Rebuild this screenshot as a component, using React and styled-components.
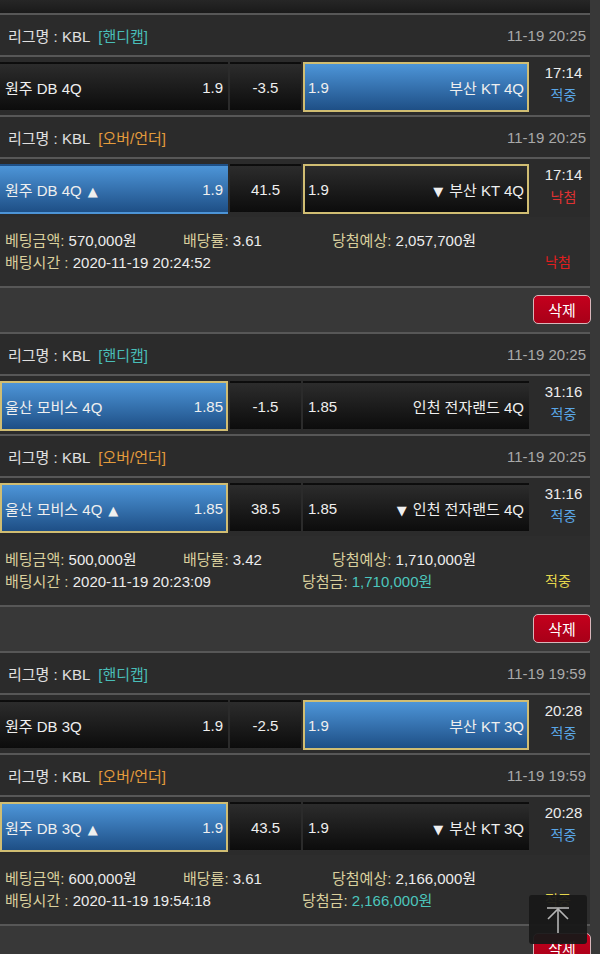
import React from "react";
import styled, { createGlobalStyle } from "styled-components";

const Global = createGlobalStyle`
  html, body { margin: 0; padding: 0; background: #383838; }
  body { font-family: "Liberation Sans", "Noto Sans CJK KR", sans-serif; font-size: 15px; color: #e6e6e6; }
  * { box-sizing: border-box; }
`;

const Page = styled.div`
  width: 590px;
  display: flex;
  flex-direction: column;
`;

const TopStrip = styled.div`
  height: 13px;
  background: linear-gradient(#262626, #1a1a1a);
`;

const Line = styled.div`
  height: 2px;
  background: #575757;
`;

const Header = styled.div`
  height: 40px;
  background: #2b2b2b;
  display: flex;
  align-items: center;
  justify-content: space-between;
  padding: 0 4px 0 8px;
`;

const League = styled.span`
  color: #e0e0e0;
`;

const Tag = styled.span`
  margin-left: 8px;
  color: ${(p) => (p.$kind === "ou" ? "#e39b3c" : "#49bdb8")};
`;

const DateText = styled.span`
  color: #a9a9a9;
`;

const MatchRow = styled.div`
  height: 58px;
  background: #2b2b2b;
  display: grid;
  grid-template-columns: 228px 71px 226px 1fr;
  column-gap: 2px;
  padding: 5px 0 3px;
`;

const Cell = styled.div`
  height: 50px;
  display: flex;
  align-items: center;
  justify-content: ${(p) => (p.$center ? "center" : "space-between")};
  padding: 0 3px;
  color: #efefef;
  border: 2px solid ${(p) => (p.$picked ? "#d0bd72" : "transparent")};
  background: ${(p) =>
    p.$blue
      ? "linear-gradient(#4d95d8, #1e4f86)"
      : "linear-gradient(#2c2c2c, #0c0c0c)"};
  white-space: nowrap;
`;

const Tri = styled.span`
  font-family: "DejaVu Sans", sans-serif;
  font-size: 13px;
  margin: ${(p) => (p.$down ? "0 6px 0 0" : "0 0 0 6px")};
`;

const TimeCol = styled.div`
  display: flex;
  flex-direction: column;
  align-items: center;
  justify-content: center;
  padding: 0 0 6px 6px;
  line-height: 22px;
`;

const Clock = styled.span`
  color: #ececec;
`;

const Status = styled.span`
  font-size: 14px;
  color: ${(p) => p.$color};
`;

const Info = styled.div`
  background: #2d2d2d;
  padding: 11px 0 14px 5px;
  display: flex;
  flex-direction: column;
`;

const InfoLine = styled.div`
  display: flex;
  height: 22px;
  align-items: center;
  white-space: nowrap;
`;

const InfoItem = styled.span`
  width: ${(p) => (p.$w ? `${p.$w}px` : "auto")};
  flex: ${(p) => (p.$w ? "none" : "1")};
  color: #ececec;
`;

const Label = styled.span`
  color: #d9cf9c;
`;

const WinValue = styled.span`
  color: #4cc6bd;
`;

const Result = styled.span`
  width: 60px;
  text-align: center;
  margin-right: 2px;
  font-size: 14px;
  color: ${(p) => p.$color};
`;

const DeleteRow = styled.div`
  height: 44px;
  background: #383838;
  display: flex;
  justify-content: flex-end;
  align-items: flex-start;
  padding: 7px 0 0;
  margin-right: -1px;
`;

const DeleteButton = styled.button`
  width: 58px;
  height: 29px;
  border: 1.5px solid #d8b6ba;
  border-radius: 5px;
  background: linear-gradient(#c4001d, #a80018);
  color: #fff;
  font-family: inherit;
  font-size: 15px;
  padding: 0;
`;

const TopButton = styled.div`
  position: fixed;
  right: 13px;
  bottom: 10px;
  width: 58px;
  height: 49px;
  background: rgba(24, 24, 24, 0.95);
  border-radius: 3px;
  display: flex;
  align-items: center;
  justify-content: center;
`;

const BLUE = "#5aa6e6";
const RED = "#e03232";
const YELLOW = "#e4d64c";

const groups = [
  {
    matches: [
      {
        kind: "hc",
        date: "11-19 20:25",
        left: { name: "원주 DB 4Q", odds: "1.9" },
        mid: "-3.5",
        right: { odds: "1.9", name: "부산 KT 4Q", blue: true, picked: true },
        time: "17:14",
        status: "적중",
        statusColor: BLUE,
      },
      {
        kind: "ou",
        date: "11-19 20:25",
        left: { name: "원주 DB 4Q", odds: "1.9", blue: true, up: true },
        mid: "41.5",
        right: { odds: "1.9", name: "부산 KT 4Q", picked: true, down: true },
        time: "17:14",
        status: "낙첨",
        statusColor: RED,
      },
    ],
    info: {
      amount: "570,000원",
      rate: "3.61",
      expect: "2,057,700원",
      at: "2020-11-19 20:24:52",
      win: null,
      result: "낙첨",
      resultColor: "#e01e1e",
    },
  },
  {
    matches: [
      {
        kind: "hc",
        date: "11-19 20:25",
        left: { name: "울산 모비스 4Q", odds: "1.85", blue: true, picked: true },
        mid: "-1.5",
        right: { odds: "1.85", name: "인천 전자랜드 4Q" },
        time: "31:16",
        status: "적중",
        statusColor: BLUE,
      },
      {
        kind: "ou",
        date: "11-19 20:25",
        left: { name: "울산 모비스 4Q", odds: "1.85", blue: true, picked: true, up: true },
        mid: "38.5",
        right: { odds: "1.85", name: "인천 전자랜드 4Q", down: true },
        time: "31:16",
        status: "적중",
        statusColor: BLUE,
      },
    ],
    info: {
      amount: "500,000원",
      rate: "3.42",
      expect: "1,710,000원",
      at: "2020-11-19 20:23:09",
      win: "1,710,000원",
      result: "적중",
      resultColor: YELLOW,
    },
  },
  {
    matches: [
      {
        kind: "hc",
        date: "11-19 19:59",
        left: { name: "원주 DB 3Q", odds: "1.9" },
        mid: "-2.5",
        right: { odds: "1.9", name: "부산 KT 3Q", blue: true, picked: true },
        time: "20:28",
        status: "적중",
        statusColor: BLUE,
      },
      {
        kind: "ou",
        date: "11-19 19:59",
        left: { name: "원주 DB 3Q", odds: "1.9", blue: true, picked: true, up: true },
        mid: "43.5",
        right: { odds: "1.9", name: "부산 KT 3Q", down: true },
        time: "20:28",
        status: "적중",
        statusColor: BLUE,
      },
    ],
    info: {
      amount: "600,000원",
      rate: "3.61",
      expect: "2,166,000원",
      at: "2020-11-19 19:54:18",
      win: "2,166,000원",
      result: "적중",
      resultColor: YELLOW,
    },
  },
];

function Match({ m }) {
  return (
    <>
      <Line />
      <Header>
        <span>
          <League>리그명 : KBL</League>
          <Tag $kind={m.kind}>{m.kind === "ou" ? "[오버/언더]" : "[핸디캡]"}</Tag>
        </span>
        <DateText>{m.date}</DateText>
      </Header>
      <Line />
      <MatchRow>
        <Cell $blue={m.left.blue} $picked={m.left.picked}>
          <span>
            {m.left.name}
            {m.left.up && <Tri>▲</Tri>}
          </span>
          <span>{m.left.odds}</span>
        </Cell>
        <Cell $center>{m.mid}</Cell>
        <Cell $blue={m.right.blue} $picked={m.right.picked}>
          <span>{m.right.odds}</span>
          <span>
            {m.right.down && <Tri $down>▼</Tri>}
            {m.right.name}
          </span>
        </Cell>
        <TimeCol>
          <Clock>{m.time}</Clock>
          <Status $color={m.statusColor}>{m.status}</Status>
        </TimeCol>
      </MatchRow>
    </>
  );
}

function Group({ g }) {
  const i = g.info;
  return (
    <>
      {g.matches.map((m, k) => (
        <Match key={k} m={m} />
      ))}
      <Info>
        <InfoLine>
          <InfoItem $w={178}>
            <Label>베팅금액:</Label> {i.amount}
          </InfoItem>
          <InfoItem $w={149}>
            <Label>배당률:</Label> {i.rate}
          </InfoItem>
          <InfoItem>
            <Label>당첨예상:</Label> {i.expect}
          </InfoItem>
        </InfoLine>
        <InfoLine>
          <InfoItem $w={297}>
            <Label>배팅시간 :</Label> {i.at}
          </InfoItem>
          <InfoItem>
            {i.win && (
              <>
                <Label>당첨금:</Label> <WinValue>{i.win}</WinValue>
              </>
            )}
          </InfoItem>
          <Result $color={i.resultColor}>{i.result}</Result>
        </InfoLine>
      </Info>
      <Line />
      <DeleteRow>
        <DeleteButton>삭제</DeleteButton>
      </DeleteRow>
    </>
  );
}

export default function App() {
  return (
    <>
      <Global />
      <Page>
        <TopStrip />
        {groups.map((g, k) => (
          <Group key={k} g={g} />
        ))}
      </Page>
      <TopButton>
        <svg width="26" height="28" viewBox="0 0 26 28" fill="none" stroke="#b5b5b5" strokeWidth="1.6">
          <line x1="2" y1="2" x2="24" y2="2" />
          <line x1="13" y1="3" x2="13" y2="27" />
          <polyline points="3,13 13,3 23,13" />
        </svg>
      </TopButton>
    </>
  );
}
